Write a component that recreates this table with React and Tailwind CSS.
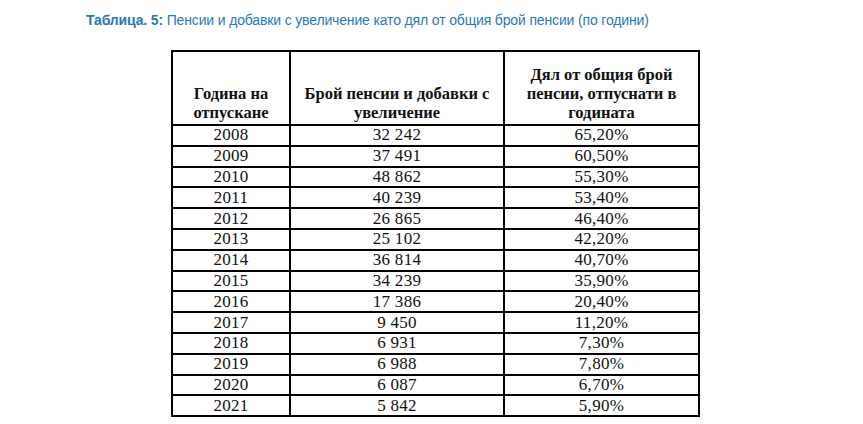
import React from "react";

const rows = [
  ["2008", "32 242", "65,20%"],
  ["2009", "37 491", "60,50%"],
  ["2010", "48 862", "55,30%"],
  ["2011", "40 239", "53,40%"],
  ["2012", "26 865", "46,40%"],
  ["2013", "25 102", "42,20%"],
  ["2014", "36 814", "40,70%"],
  ["2015", "34 239", "35,90%"],
  ["2016", "17 386", "20,40%"],
  ["2017", "9 450", "11,20%"],
  ["2018", "6 931", "7,30%"],
  ["2019", "6 988", "7,80%"],
  ["2020", "6 087", "6,70%"],
  ["2021", "5 842", "5,90%"],
];

const App = () => {
  return (
    <div className="w-[863px] h-[424px] bg-white overflow-hidden">
      {/* Caption */}
      <p className="pl-[86px] pt-[11px] text-[14px] leading-[18px] tracking-[-0.15px] text-[#2b79b9] font-['Liberation_Sans',Arial,sans-serif]">
        <span className="font-bold">Таблица. 5:</span> Пенсии и добавки с увеличение като дял от общия брой пенсии (по години)
      </p>

      {/* Table */}
      <div className="pl-[171px] pt-[21px]">
        <table className="border-collapse border-2 border-black font-['Liberation_Serif','Times_New_Roman',serif] text-[#111]">
          <thead>
            <tr className="h-[74px]">
              <th className="w-[118px] border-2 border-black align-bottom pb-[2px] text-[16.5px] leading-[19px] font-bold">
                Година на
                <br />
                отпускане
              </th>
              <th className="w-[214px] border-2 border-black align-bottom pb-[2px] text-[16.5px] leading-[19px] font-bold">
                Брой пенсии и добавки с
                <br />
                увеличение
              </th>
              <th className="w-[195px] border-2 border-black align-bottom pb-[2px] text-[16.5px] leading-[19px] font-bold">
                Дял от общия брой
                <br />
                пенсии, отпуснати в
                <br />
                годината
              </th>
            </tr>
          </thead>
          <tbody>
            {rows.map((r) => (
              <tr key={r[0]} className="h-[20.8px]">
                {r.map((c, i) => (
                  <td
                    key={i}
                    className="border-2 border-black text-center text-[17px] leading-[16px] p-0 tracking-[0.3px]"
                  >
                    {c}
                  </td>
                ))}
              </tr>
            ))}
          </tbody>
        </table>
      </div>
    </div>
  );
};

export default App;
